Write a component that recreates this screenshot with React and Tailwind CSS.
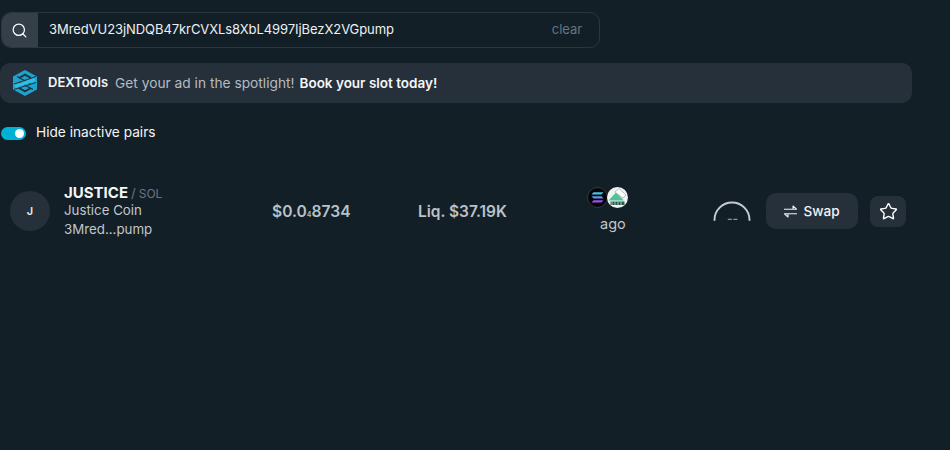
import React from "react";
import { Search, Star } from "lucide-react";

export default function App() {
  return (
    <div className="w-[950px] h-[450px] overflow-hidden bg-[#131f27] text-white font-['Inter',sans-serif] pt-3">
      <div className="ml-px w-[599px] h-9 flex rounded-[10px] border border-[#2a3640] overflow-hidden">
        <div className="w-[36px] bg-[#343f4a] flex items-center justify-center shrink-0 pr-[2px]">
          <Search size={17} strokeWidth={1.75} className="text-white" />
        </div>
        <div className="flex-1 flex items-center justify-between pl-[11px] pr-[17px] text-[13px] tracking-[-0.07px]">
          <span className="text-[#eef0f2]">3MredVU23jNDQB47krCVXLs8XbL4997IjBezX2VGpump</span>
          <span className="text-[#68737f]">clear</span>
        </div>
      </div>

      <div className="mt-[15px] w-[912px] h-10 rounded-[10px] bg-[#25303b] flex items-center pl-[13px] text-[13px]">
        <svg width="24" height="26" viewBox="0 0 24 26" className="shrink-0" fill="none">
          <path d="M12 0 L24 6.5 V19.5 L12 26 L0 19.5 V6.5 Z" fill="#1ea3cf" />
          <path d="M6 8 L12 4.6 L18 8" stroke="#25303b" strokeWidth="1.8" />
          <path d="M18 18 L12 21.4 L6 18" stroke="#25303b" strokeWidth="1.8" />
          <path d="M4 6.5 L17 13.5 M7 12.5 L20 19.5" stroke="#25303b" strokeWidth="1.4" />
          <path d="M22 9.5 L2 16.5" stroke="#2cc0e6" strokeWidth="3.4" />
          <path d="M23 6.5 L1 14 M23 12.5 L1 19.5" stroke="#25303b" strokeWidth="1" />
        </svg>
        <span className="ml-[11px] font-semibold text-[#f3f5f6]">DEXTools</span>
        <span className="ml-[7px] text-[13.75px] text-[#b4bbc2]">Get your ad in the spotlight!</span>
        <span className="ml-[5px] text-[13.5px] font-semibold text-[#f5f6f7]">Book your slot today!</span>
      </div>

      <div className="mt-[18px] h-6 flex items-center">
        <div className="ml-px w-[25px] h-[13px] rounded-full bg-[#00b1d6] flex items-center justify-end pr-[2px]">
          <div className="w-[9px] h-[9px] rounded-full bg-white" />
        </div>
        <span className="ml-[10px] text-[13.7px] text-[#f3f5f6] leading-[22px] pb-[2px]">Hide inactive pairs</span>
      </div>

      <div className="mt-[36px] w-[912px] flex items-center h-[60px]">
        <div className="ml-[10px] w-10 h-10 rounded-full bg-[#25303b] flex items-center justify-center text-[11px] font-semibold text-[#e8eaec] shrink-0">J</div>
        <div className="ml-[14px] w-[208px] shrink-0 flex flex-col -mt-[2px]">
          <div className="flex items-baseline h-[19px]">
            <span className="text-[15px] font-bold text-[#f4f6f7]">JUSTICE</span>
            <span className="ml-[3px] text-[13px] text-[#6b7681]">/</span>
            <span className="ml-[3px] text-[12px] text-[#6b7681]">SOL</span>
          </div>
          <span className="text-[13.3px] h-[19px] leading-[19px] text-[#c0c6cc]">Justice Coin</span>
          <span className="text-[13.3px] h-[19px] leading-[19px] text-[#c0c6cc]">3Mred...pump</span>
        </div>
        <div className="w-[146px] shrink-0 text-[15.6px] font-semibold text-[#bac1c8] pt-[2px]">
          $0.0<span className="text-[7px]">4</span>8734
        </div>
        <div className="w-[169px] shrink-0 text-[15.5px] font-semibold text-[#bac1c8] pt-[2px]">Liq. $37.19K</div>
        <div className="w-[126px] shrink-0 flex flex-col mt-[1px]">
          <div className="flex">
            <svg width="21" height="21" viewBox="0 0 21 21">
              <circle cx="10.5" cy="10.5" r="10.5" fill="#05060a" />
              <circle cx="10.5" cy="10.5" r="10" fill="none" stroke="#39404a" />
              <path d="M4.5 7.6 L6.5 5.2 H16.5 L14.5 7.6 Z" fill="#3fc7e8" />
              <path d="M4.5 9.2 H14.5 L16.5 11.6 H6.5 Z" fill="#6a8fe0" />
              <path d="M4.5 15.6 L6.5 13.2 H16.5 L14.5 15.6 Z" fill="#9a4ff0" />
            </svg>
            <svg width="21" height="21" viewBox="0 0 21 21" className="-ml-px">
              <circle cx="10.5" cy="10.5" r="10.5" fill="#eef3f0" />
              <path d="M1.5 13.5 L9 5.5 L17 13.5 Z" fill="#4fc39a" />
              <path d="M8 5 L12 1.5 L19 8 L16 11 Z" fill="#ffffff" stroke="#8f9a95" strokeWidth="0.6" />
              <path d="M3.5 14.5 H17.5 V18 H3.5 Z" fill="#2c5a4d" />
              <path d="M5 14.5 V18 M8 14.5 V18 M11 14.5 V18 M14 14.5 V18" stroke="#dfe8e3" strokeWidth="0.7" />
            </svg>
          </div>
          <span className="ml-[13px] mt-[4px] text-[14.5px] leading-[24px] text-[#c0c6cc]">ago</span>
        </div>
        <div className="w-[53px] shrink-0 relative h-[30px]">
          <svg width="40" height="24" viewBox="0 0 40 24" className="absolute left-0 top-[3px]">
            <path d="M1.5 21 A17.5 17.5 0 0 1 36.5 21" fill="none" stroke="#c5cad0" strokeWidth="2" strokeLinecap="round" />
          </svg>
          <span className="absolute left-[14px] top-[14px] text-[12px] font-semibold text-[#8d96a0]">--</span>
        </div>
        <button className="w-[92px] h-9 rounded-[10px] bg-[#25303b] flex items-center justify-center gap-[5px] text-[13.6px] text-[#f0f2f4] font-medium shrink-0 pr-[1px]">
          <svg width="15" height="15" viewBox="0 0 15 15" fill="none" stroke="currentColor" strokeWidth="1.1" strokeLinejoin="round">
            <path d="M1 5.2 H13.5 L10 2 V5.2" />
            <path d="M14 9.8 H1.5 L5 13 V9.8" />
          </svg>
          Swap
        </button>
        <button className="ml-3 w-9 h-[31px] rounded-[8px] bg-[#25303b] flex items-center justify-center shrink-0">
          <Star size={19} strokeWidth={1.75} className="text-white" />
        </button>
      </div>
    </div>
  );
}
